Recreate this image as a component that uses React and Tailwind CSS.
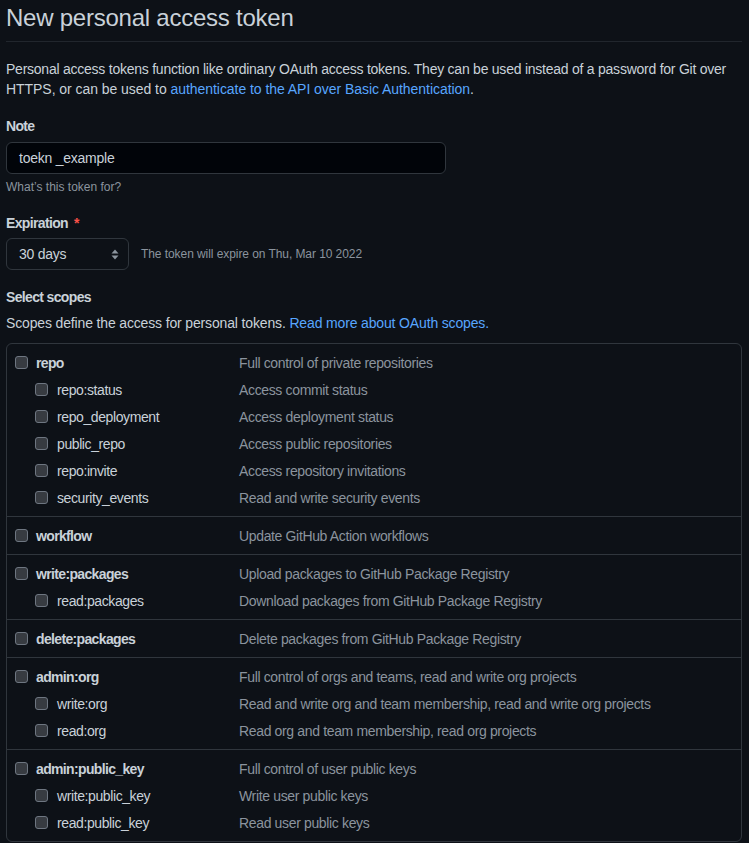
import React from "react";

const groups = [
  [
    ["repo", "Full control of private repositories"],
    ["repo:status", "Access commit status"],
    ["repo_deployment", "Access deployment status"],
    ["public_repo", "Access public repositories"],
    ["repo:invite", "Access repository invitations"],
    ["security_events", "Read and write security events"],
  ],
  [["workflow", "Update GitHub Action workflows"]],
  [
    ["write:packages", "Upload packages to GitHub Package Registry"],
    ["read:packages", "Download packages from GitHub Package Registry"],
  ],
  [["delete:packages", "Delete packages from GitHub Package Registry"]],
  [
    ["admin:org", "Full control of orgs and teams, read and write org projects"],
    ["write:org", "Read and write org and team membership, read and write org projects"],
    ["read:org", "Read org and team membership, read org projects"],
  ],
  [
    ["admin:public_key", "Full control of user public keys"],
    ["write:public_key", "Write user public keys"],
    ["read:public_key", "Read user public keys"],
  ],
];

function Box() {
  return (
    <span className="block w-[13px] h-[13px] shrink-0 rounded-[3px] border border-[#6e7681] bg-[#373b41]" />
  );
}

function Row({ name, desc, child }) {
  return (
    <div className="flex h-[27px] items-center">
      <div className={`flex w-[232px] shrink-0 items-center ${child ? "pl-[28px]" : "pl-[8px]"}`}>
        <Box />
        <span
          className={`${
            child ? "ml-[9px] font-normal tracking-[-0.4px]" : "ml-[8px] font-bold tracking-[-0.65px]"
          } text-[14px] leading-5 text-[#c9d1d9]`}
        >
          {name}
        </span>
      </div>
      <span className="text-[14px] leading-5 text-[#8b949e] whitespace-nowrap tracking-[-0.35px]">{desc}</span>
    </div>
  );
}

export default function App() {
  return (
    <div
      className="min-h-[843px] bg-[#0d1117] text-[#c9d1d9] tracking-[-0.015em]"
      style={{ fontFamily: '"Liberation Sans", Arial, sans-serif' }}
    >
      <div className="ml-[6px] w-[736px]">
        <div className="border-b border-[#21262d] pb-[5px]">
          <h1 className="text-[24px] leading-[36px] font-normal text-[#c9d1d9]">New personal access token</h1>
        </div>

        <p className="mt-[17px] text-[14px] leading-5 whitespace-nowrap">
          Personal access tokens function like ordinary OAuth access tokens. They can be used instead of a password for Git over
          <br />
          <span className="tracking-[-0.05px]">
            HTTPS, or can be used to <span className="text-[#58a6ff]">authenticate to the API over Basic Authentication</span>.
          </span>
        </p>

        <div className="mt-[17px] text-[14px] leading-5 font-bold tracking-[-0.65px]">Note</div>
        <div className="mt-[6px] flex h-8 w-[440px] items-center rounded-md border border-[#30363d] bg-[#010409] px-3 text-[14px] text-[#c9d1d9]">
          toekn _example
        </div>
        <div className="mt-[4px] text-[12px] leading-[18px] text-[#8b949e] tracking-normal">What’s this token for?</div>

        <div className="mt-[17px] flex text-[14px] leading-5 font-bold">
          <span className="tracking-[-0.65px]">Expiration</span>
          <span className="ml-[6px] text-[#f85149]">*</span>
        </div>
        <div className="mt-[5px] flex items-center">
          <div className="flex h-8 w-[123px] items-center justify-between rounded-md border border-[#30363d] bg-[#0d1117] pl-3 pr-[8px] text-[14px]">
            <span>30 days</span>
            <svg width="8" height="11" viewBox="0 0 8 11" className="mr-[1px]">
              <path d="M4 0.5 L7.5 4.5 H0.5 Z" fill="#8b949e" />
              <path d="M4 10.5 L7.5 6.5 H0.5 Z" fill="#8b949e" />
            </svg>
          </div>
          <span className="ml-3 text-[12px] text-[#8b949e] tracking-[-0.07px]">
            The token will expire on Thu, Mar 10 2022
          </span>
        </div>

        <div className="mt-[17px] text-[14px] leading-5 font-bold tracking-[-0.65px]">Select scopes</div>
        <p className="mt-[6px] text-[14px] leading-5 tracking-[-0.15px]">
          Scopes define the access for personal tokens.{" "}
          <span className="text-[#58a6ff]">Read more about OAuth scopes.</span>
        </p>

        <div className="mt-[10px] rounded-md border border-[#30363d]">
          {groups.map((g, gi) => (
            <div key={gi} className={`py-[5px] ${gi > 0 ? "border-t border-[#30363d]" : ""}`}>
              {g.map(([n, d], i) => (
                <Row key={n} name={n} desc={d} child={i > 0} />
              ))}
            </div>
          ))}
        </div>
      </div>
    </div>
  );
}
